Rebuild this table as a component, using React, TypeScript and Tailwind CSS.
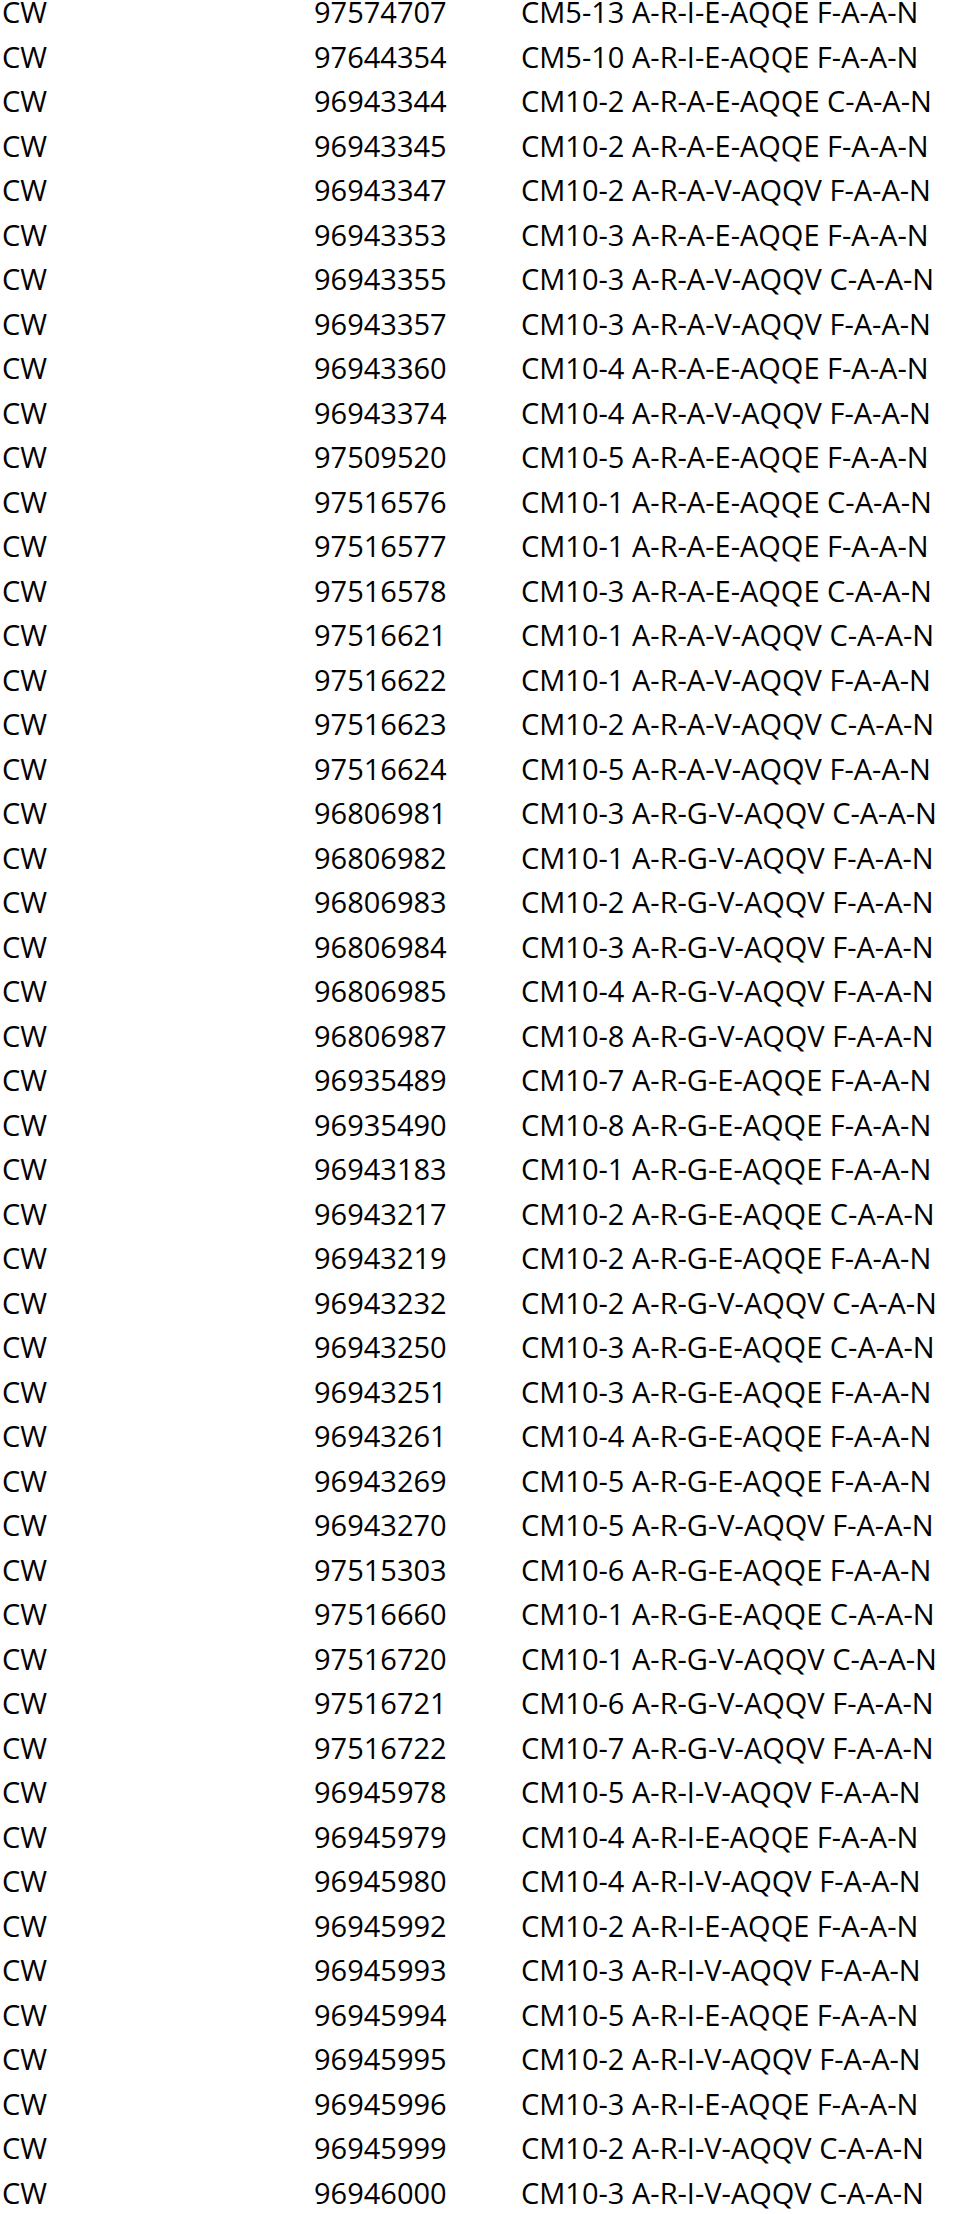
const rows: [string, string][] = [
  ["97574707", "CM5-13 A-R-I-E-AQQE F-A-A-N"],
  ["97644354", "CM5-10 A-R-I-E-AQQE F-A-A-N"],
  ["96943344", "CM10-2 A-R-A-E-AQQE C-A-A-N"],
  ["96943345", "CM10-2 A-R-A-E-AQQE F-A-A-N"],
  ["96943347", "CM10-2 A-R-A-V-AQQV F-A-A-N"],
  ["96943353", "CM10-3 A-R-A-E-AQQE F-A-A-N"],
  ["96943355", "CM10-3 A-R-A-V-AQQV C-A-A-N"],
  ["96943357", "CM10-3 A-R-A-V-AQQV F-A-A-N"],
  ["96943360", "CM10-4 A-R-A-E-AQQE F-A-A-N"],
  ["96943374", "CM10-4 A-R-A-V-AQQV F-A-A-N"],
  ["97509520", "CM10-5 A-R-A-E-AQQE F-A-A-N"],
  ["97516576", "CM10-1 A-R-A-E-AQQE C-A-A-N"],
  ["97516577", "CM10-1 A-R-A-E-AQQE F-A-A-N"],
  ["97516578", "CM10-3 A-R-A-E-AQQE C-A-A-N"],
  ["97516621", "CM10-1 A-R-A-V-AQQV C-A-A-N"],
  ["97516622", "CM10-1 A-R-A-V-AQQV F-A-A-N"],
  ["97516623", "CM10-2 A-R-A-V-AQQV C-A-A-N"],
  ["97516624", "CM10-5 A-R-A-V-AQQV F-A-A-N"],
  ["96806981", "CM10-3 A-R-G-V-AQQV C-A-A-N"],
  ["96806982", "CM10-1 A-R-G-V-AQQV F-A-A-N"],
  ["96806983", "CM10-2 A-R-G-V-AQQV F-A-A-N"],
  ["96806984", "CM10-3 A-R-G-V-AQQV F-A-A-N"],
  ["96806985", "CM10-4 A-R-G-V-AQQV F-A-A-N"],
  ["96806987", "CM10-8 A-R-G-V-AQQV F-A-A-N"],
  ["96935489", "CM10-7 A-R-G-E-AQQE F-A-A-N"],
  ["96935490", "CM10-8 A-R-G-E-AQQE F-A-A-N"],
  ["96943183", "CM10-1 A-R-G-E-AQQE F-A-A-N"],
  ["96943217", "CM10-2 A-R-G-E-AQQE C-A-A-N"],
  ["96943219", "CM10-2 A-R-G-E-AQQE F-A-A-N"],
  ["96943232", "CM10-2 A-R-G-V-AQQV C-A-A-N"],
  ["96943250", "CM10-3 A-R-G-E-AQQE C-A-A-N"],
  ["96943251", "CM10-3 A-R-G-E-AQQE F-A-A-N"],
  ["96943261", "CM10-4 A-R-G-E-AQQE F-A-A-N"],
  ["96943269", "CM10-5 A-R-G-E-AQQE F-A-A-N"],
  ["96943270", "CM10-5 A-R-G-V-AQQV F-A-A-N"],
  ["97515303", "CM10-6 A-R-G-E-AQQE F-A-A-N"],
  ["97516660", "CM10-1 A-R-G-E-AQQE C-A-A-N"],
  ["97516720", "CM10-1 A-R-G-V-AQQV C-A-A-N"],
  ["97516721", "CM10-6 A-R-G-V-AQQV F-A-A-N"],
  ["97516722", "CM10-7 A-R-G-V-AQQV F-A-A-N"],
  ["96945978", "CM10-5 A-R-I-V-AQQV F-A-A-N"],
  ["96945979", "CM10-4 A-R-I-E-AQQE F-A-A-N"],
  ["96945980", "CM10-4 A-R-I-V-AQQV F-A-A-N"],
  ["96945992", "CM10-2 A-R-I-E-AQQE F-A-A-N"],
  ["96945993", "CM10-3 A-R-I-V-AQQV F-A-A-N"],
  ["96945994", "CM10-5 A-R-I-E-AQQE F-A-A-N"],
  ["96945995", "CM10-2 A-R-I-V-AQQV F-A-A-N"],
  ["96945996", "CM10-3 A-R-I-E-AQQE F-A-A-N"],
  ["96945999", "CM10-2 A-R-I-V-AQQV C-A-A-N"],
  ["96946000", "CM10-3 A-R-I-V-AQQV C-A-A-N"],
];

export default function App() {
  return (
    <div className="w-[960px] h-[2214px] overflow-hidden bg-white text-black">
      <div
        className="flex flex-col text-[29px] leading-[24px]"
        style={{ fontFamily: '"Open Sans", "Noto Sans", sans-serif' }}
      >
        {rows.map(([num, desc]) => (
          <div
            key={num}
            className="grid h-[44.5px] shrink-0 grid-cols-[312px_207px_1fr] pl-[2px] whitespace-nowrap"
          >
            <span>CW</span>
            <span>{num}</span>
            <span>{desc}</span>
          </div>
        ))}
      </div>
    </div>
  );
}
